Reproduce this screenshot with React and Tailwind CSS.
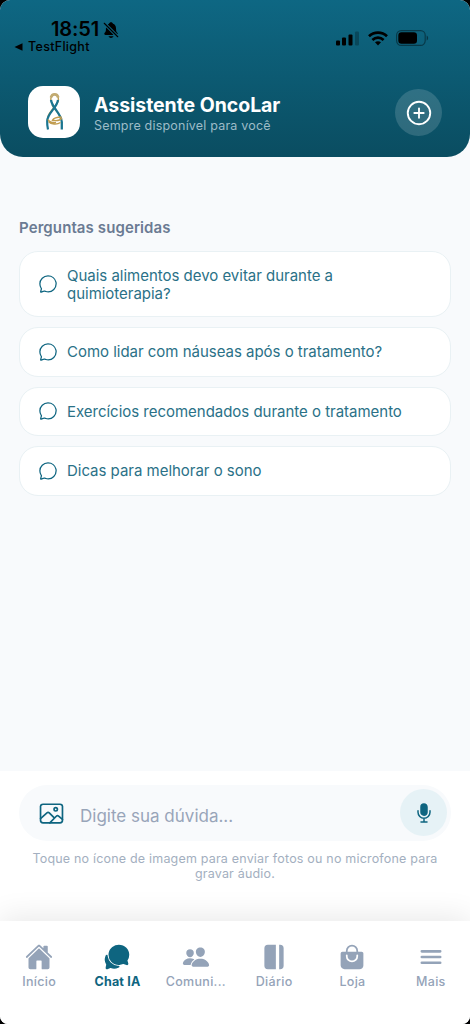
import React, { useState } from "react";
import {
  IoAddCircleOutline,
  IoBagHandle,
  IoChatbubbleOutline,
  IoChatbubbles,
  IoHome,
  IoImageOutline,
  IoJournal,
  IoMenu,
  IoMic,
  IoNotificationsOff,
  IoPeople,
} from "react-icons/io5";

const questions = [
  "Quais alimentos devo evitar durante a quimioterapia?",
  "Como lidar com náuseas após o tratamento?",
  "Exercícios recomendados durante o tratamento",
  "Dicas para melhorar o sono",
];

const tabs = [
  { id: "inicio", label: "Início", icon: IoHome },
  { id: "chat", label: "Chat IA", icon: IoChatbubbles },
  { id: "comunidade", label: "Comuni...", icon: IoPeople },
  { id: "diario", label: "Diário", icon: IoJournal },
  { id: "loja", label: "Loja", icon: IoBagHandle },
  { id: "mais", label: "Mais", icon: IoMenu },
];

const StatusBar = () => (
  <div className="flex justify-between h-[86px] pt-[19px] text-black">
    <div className="pl-[14px]">
      <div className="flex items-center h-[21px] pl-[37px] gap-[3px]">
        <span className="text-[20px] leading-[21px] font-semibold tracking-[-0.1px]">18:51</span>
        <IoNotificationsOff className="size-[18px]" />
      </div>
      <div className="flex items-center h-[14px] gap-[5px]">
        <svg width="9" height="8" viewBox="0 0 9 8">
          <path d="M0.5 4 8.5 0.3v7.4z" />
        </svg>
        <span className="text-[12.5px] leading-[14px] font-medium tracking-[0.3px]">TestFlight</span>
      </div>
    </div>
    <div className="flex items-start pt-[11px] pr-[41px]">
      {/* Señal */}
      <svg width="23" height="15" viewBox="0 0 23 15" className="mt-[1px]">
        <rect x="0" y="9.5" width="4" height="5" rx="1" />
        <rect x="6" y="6.5" width="4" height="8" rx="1" />
        <rect x="12.5" y="3.5" width="4" height="11" rx="1" />
        <rect x="19" y="0.5" width="4" height="14" rx="1" opacity="0.25" />
      </svg>
      <svg width="20" height="15" viewBox="0 0 20 15" className="ml-[9px] mt-[0.5px]" fill="none" stroke="#000" strokeWidth="2.7">
        <path d="M1 5.3C6 .4 14 .4 19 5.3" />
        <path d="M4.4 8.9c3.2-3 8-3 11.2 0" />
        <path d="M7 11.3c1.7-1.5 4.3-1.5 6 0L10 14.4z" fill="#000" stroke="none" />
      </svg>
      <svg width="33" height="16" viewBox="0 0 33 16" className="ml-[8px]">
        <rect x="0.6" y="0.6" width="28.6" height="14.8" rx="4.6" fill="none" stroke="#000" strokeWidth="1.2" opacity="0.4" />
        <rect x="2.3" y="2.3" width="18.7" height="11.4" rx="3.2" />
        <path d="M30.7 5.5c1.9.7 1.9 4.3 0 5z" opacity="0.45" />
      </svg>
    </div>
  </div>
);

const Logo = () => (
  <svg width="28" height="48" viewBox="0 0 28 48" fill="none">
    {/* Lazo dorado */}
    <path d="M10.7 13C10.7 4 18.5 4 18.5 12C18.3 17 9.5 22 7.8 29" stroke="#b99c54" strokeWidth="1.4" />
    <path d="M11 9.5C12 5.3 17.3 5.3 18.2 9.5" stroke="#c2ab72" strokeWidth="2.8" />
    <path d="M12 17C14 22 20 25 21.5 32" stroke="#c9ac62" strokeWidth="1.3" />
    {/* Cinta azul */}
    <path d="M18 12C17 20 7.5 25 7.2 33C7 37 7.3 38.5 8 41.5" stroke="#1b7590" strokeWidth="2.2" />
    <path d="M11 12C12 20 21 25 21.8 34V41.5" stroke="#1b7590" strokeWidth="2.3" />
    {/* Manos */}
    <path d="M21.5 29C17 29 14 29.5 12.5 32.2C16 33 20 32.5 22 30M8.5 33.5C11 36.5 17 37 20.5 34.5M8 31.5C9 34 13 35 16 34.5" stroke="#c19d50" strokeWidth="1.4" />
  </svg>
);

const Header = () => (
  <header className="h-[157px] rounded-b-[23px] bg-linear-to-b from-[#0e6783] to-[#0a4d61]">
    <StatusBar />
    <div className="flex items-center h-[52px] pl-7 pr-7">
      <div className="flex items-center justify-center size-[52px] rounded-[15px] bg-white">
        <Logo />
      </div>
      <div className="flex-1 pl-[14px] pt-[4px]">
        <h1 className="text-[19.5px] leading-[23px] font-bold tracking-[-0.05px] text-white">Assistente OncoLar</h1>
        <p className="text-[12.5px] leading-[18px] text-[#9dbcc7] tracking-[0.2px]">
          Sempre disponível para você
        </p>
      </div>
      <button className="flex items-center justify-center size-[47px] mt-[1px] rounded-full bg-white/15 text-white" type="button">
        <IoAddCircleOutline className="size-[30px]" />
      </button>
    </div>
  </header>
);

const Composer = () => {
  const [text, setText] = useState("");

  return (
    <div className="h-[150px] shrink-0 bg-white px-[19px] pt-[14px]">
      <div className="flex items-center h-[56px] rounded-full bg-[#f8fafc] pl-[19px] pr-[4px]">
        <IoImageOutline className="size-[27px] text-[#0e6580] shrink-0" />
        <input
          value={text}
          onChange={(e) => setText(e.target.value)}
          placeholder="Digite sua dúvida..."
          className="flex-1 min-w-0 h-[30px] ml-[15px] mt-[6px] text-[17px] text-[#0e6580] placeholder:text-[#98a5b9] outline-none"
        />
        <button className="flex items-center justify-center size-[47px] mb-[1px] rounded-full bg-[#e6f2f6] text-[#0e6580]" type="button">
          <IoMic className="size-[24px]" />
        </button>
      </div>
      <p className="mt-[10px] text-center text-[12.5px] leading-[15px] tracking-[0.19px] text-[#a3afc0]">
        Toque no ícone de imagem para enviar fotos ou no microfone para gravar áudio.
      </p>
    </div>
  );
};

const TabBar = () => {
  const [active, setActive] = useState("chat");

  return (
    <nav className="relative grid grid-cols-6 h-[103px] shrink-0 pt-[22px] bg-white shadow-[0_-4px_28px_rgba(0,0,0,0.09)]">
      {tabs.map(({ id, label, icon: Icon }) => (
        <button
          key={id}
          type="button"
          onClick={() => setActive(id)}
          className={`flex flex-col items-center h-[50px] ${active === id ? "text-[#0e6580]" : "text-[#94a3b8]"}`}>
          <Icon className="size-[28px]" />
          <span className={`mt-[3px] text-[12.5px] leading-[16px] ${active === id ? "font-bold tracking-[0.2px]" : "font-medium tracking-[0.3px]"}`}>
            {label}
          </span>
        </button>
      ))}
    </nav>
  );
};

const App = () => {
  return (
    <div className="bg-black w-[470px] h-[1024px]">
      <div className="flex flex-col h-full overflow-hidden rounded-t-[10px] rounded-b-[8px] bg-[#f8fafc] font-['Inter','Liberation_Sans',sans-serif]">
        <Header />
        <main className="flex-1 px-[19px] pt-[61px]">
          <h2 className="text-[15px] leading-[20px] font-semibold tracking-[0.1px] text-[#6b7b93]">Perguntas sugeridas</h2>
          <div className="flex flex-col gap-[10px] mt-[13px]">
            {questions.map((question) => (
              <button
                key={question}
                type="button"
                className="flex items-center rounded-[19px] border border-[#e9f1f4] bg-white pl-[18px] pr-[40px] pt-[14.6px] pb-[13.8px] text-left">
                <IoChatbubbleOutline className="size-[20px] -mt-px shrink-0 text-[#0e6580]" />
                <span className="ml-[9px] text-[15px] leading-[18px] tracking-[-0.02px] text-[#2a7187]">{question}</span>
              </button>
            ))}
          </div>
        </main>
        <Composer />
        <TabBar />
      </div>
    </div>
  );
};

export default App;
